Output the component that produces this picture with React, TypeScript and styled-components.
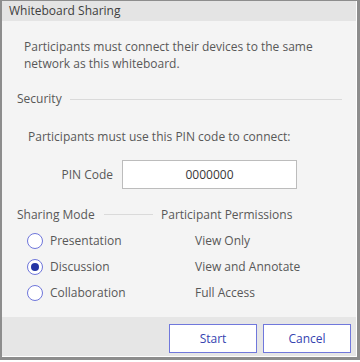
import React from "react";
import styled, { createGlobalStyle } from "styled-components";

const Global = createGlobalStyle`
  html, body { margin: 0; padding: 0; background: #ffffff; }
  body { font-family: "Open Sans", "Noto Sans", sans-serif; width: 360px; height: 362px; overflow: hidden; }
`;

const Frame = styled.div`
  box-sizing: border-box;
  width: 360px;
  height: 360px;
  border-style: solid;
  border-color: #8d8d8d;
  border-width: 1px 3px 3px 2px;
  padding: 0 1px 1px 0;
  background: #ffffff;
`;

const Window = styled.div`
  display: flex;
  flex-direction: column;
  height: 100%;
  background: #f4f4f4;
`;

const TitleBar = styled.div`
  height: 20px;
  background: #e4e4e4;
  color: #3e3e3e;
  font-size: 12px;
  line-height: 20px;
  padding-left: 7px;
`;

const Content = styled.div`
  flex: 1;
  display: flex;
  flex-direction: column;
  padding: 17px 14px 0 15px;
  color: #585858;
  font-size: 12px;
`;

const Para = styled.div`
  padding-left: 7px;
  line-height: 17px;
`;

const SectionHeader = styled.div`
  display: flex;
  align-items: center;
  height: 20px;
  line-height: 20px;
  margin-top: 17px;
  gap: 8px;
`;

const Rule = styled.div`
  flex: 1;
  height: 1px;
  background: #dadada;
`;

const Note = styled.div`
  height: 20px;
  line-height: 20px;
  margin-top: 18px;
  padding-left: 11px;
`;

const PinRow = styled.div`
  display: grid;
  grid-template-columns: 96px 175px;
  column-gap: 9px;
  align-items: center;
  margin-top: 12.5px;
  height: 29px;
`;

const PinLabel = styled.div`
  text-align: right;
`;

const PinInput = styled.div`
  box-sizing: border-box;
  height: 29px;
  background: #ffffff;
  border: 1px solid #bcbcbc;
  color: #383838;
  text-align: center;
  line-height: 27px;
`;

const ModeGrid = styled.div`
  display: grid;
  grid-template-columns: 144px 1fr;
  grid-template-rows: 23px repeat(3, 26px);
  margin-top: 16px;
  align-items: center;
`;

const ModeTitle = styled.div`
  align-self: start;
  display: flex;
  align-items: center;
  gap: 9px;
  padding-right: 8px;
  line-height: 20px;
`;

const PermTitle = styled.div`
  align-self: start;
  line-height: 20px;
`;

const RadioRow = styled.label`
  display: flex;
  align-items: center;
  gap: 7px;
  padding-left: 10px;
  line-height: 26px;
`;

const RadioCircle = styled.span<{ $checked?: boolean }>`
  box-sizing: border-box;
  flex: none;
  width: 16px;
  height: 16px;
  border-radius: 50%;
  border: 1.3px solid #6f76db;
  background: #ffffff;
  display: flex;
  align-items: center;
  justify-content: center;
  &::after {
    content: "";
    display: ${(p) => (p.$checked ? "block" : "none")};
    width: 8px;
    height: 8px;
    border-radius: 50%;
    background: #2434a5;
  }
`;

const Perm = styled.div`
  padding-left: 34px;
  line-height: 26px;
`;

const Footer = styled.div`
  box-sizing: border-box;
  height: 39px;
  background: #e6e6e6;
  display: flex;
  justify-content: flex-end;
  align-items: flex-start;
  gap: 6px;
  padding: 7px 5px 0 0;
`;

const Button = styled.button`
  box-sizing: border-box;
  width: 88px;
  height: 29px;
  background: #ffffff;
  border: 1px solid #7078dc;
  border-radius: 0;
  color: #3543b0;
  font-family: "Open Sans", "Noto Sans", sans-serif;
  font-size: 12px;
  padding: 0;
  cursor: pointer;
`;

const modes = [
  { label: "Presentation", perm: "View Only", checked: false },
  { label: "Discussion", perm: "View and Annotate", checked: true },
  { label: "Collaboration", perm: "Full Access", checked: false },
];

export default function App() {
  return (
    <>
      <Global />
      <Frame>
        <Window>
          <TitleBar>Whiteboard Sharing</TitleBar>
          <Content>
            <Para>
              Participants must connect their devices to the same
              <br />
              network as this whiteboard.
            </Para>
            <SectionHeader>
              <span>Security</span>
              <Rule />
            </SectionHeader>
            <Note>Participants must use this PIN code to connect:</Note>
            <PinRow>
              <PinLabel>PIN Code</PinLabel>
              <PinInput>0000000</PinInput>
            </PinRow>
            <ModeGrid>
              <ModeTitle>
                <span>Sharing Mode</span>
                <Rule />
              </ModeTitle>
              <PermTitle>Participant Permissions</PermTitle>
              {modes.map((m) => (
                <React.Fragment key={m.label}>
                  <RadioRow>
                    <RadioCircle $checked={m.checked} />
                    <span>{m.label}</span>
                  </RadioRow>
                  <Perm>{m.perm}</Perm>
                </React.Fragment>
              ))}
            </ModeGrid>
          </Content>
          <Footer>
            <Button>Start</Button>
            <Button>Cancel</Button>
          </Footer>
        </Window>
      </Frame>
    </>
  );
}
